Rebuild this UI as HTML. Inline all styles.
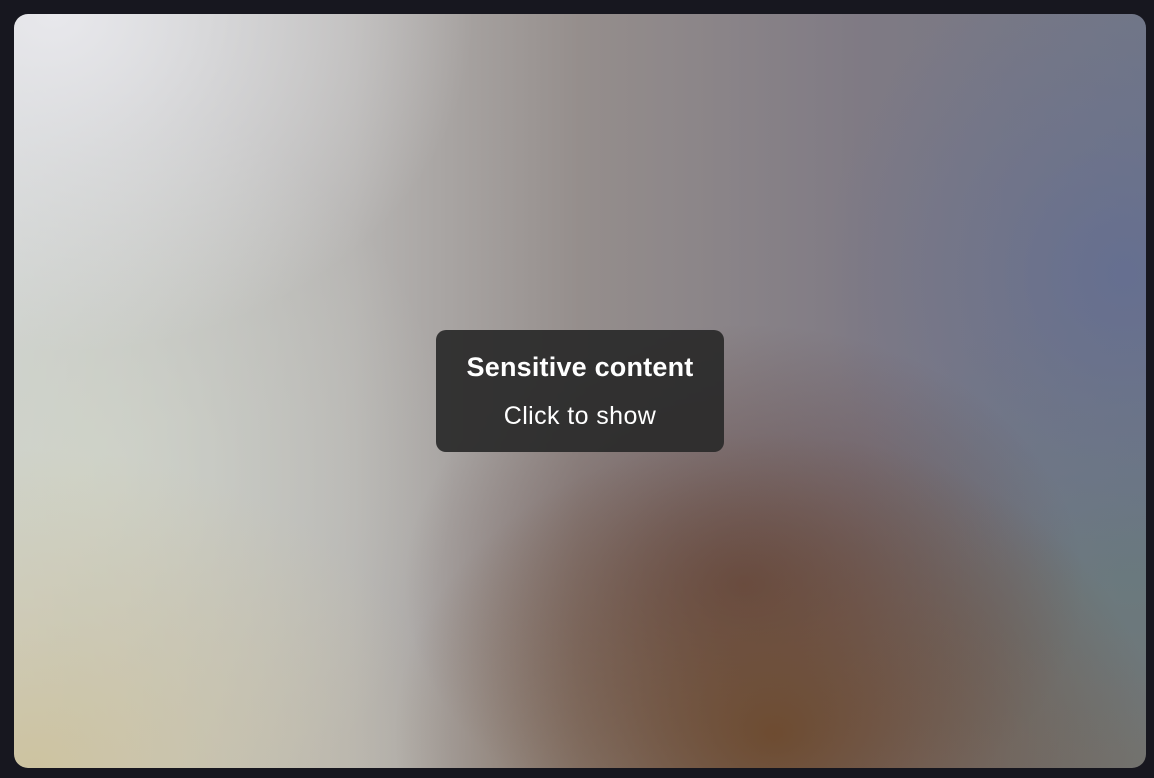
<!DOCTYPE html>
<html><head><meta charset="utf-8"><style>
html,body{margin:0;padding:0;width:1154px;height:778px;background:#17171f;overflow:hidden}
.card{position:absolute;left:14px;top:14px;width:1132px;height:754px;border-radius:14px;overflow:hidden;
background:
radial-gradient(ellipse 380px 300px at 760px 720px, rgba(108,72,42,0.9), rgba(108,72,42,0.5) 40%, rgba(108,72,42,0) 100%),
radial-gradient(ellipse 340px 260px at 730px 570px, rgba(95,65,62,0.8), rgba(95,65,62,0.4) 45%, rgba(95,65,62,0) 100%),
radial-gradient(ellipse 300px 320px at 1110px 260px, rgba(100,110,145,0.9), rgba(100,110,145,0.4) 45%, rgba(100,110,145,0) 100%),
radial-gradient(ellipse 300px 280px at 1120px 560px, rgba(105,122,125,0.9), rgba(105,122,125,0.4) 45%, rgba(105,122,125,0) 100%),
radial-gradient(ellipse 300px 260px at 1130px 750px, rgba(118,112,104,0.9), rgba(118,112,104,0) 100%),
radial-gradient(ellipse 420px 340px at 40px 0px, rgba(232,232,236,1), rgba(232,232,236,0.5) 45%, rgba(232,232,236,0) 100%),
radial-gradient(ellipse 420px 320px at 20px 754px, rgba(205,195,160,1), rgba(205,195,160,0.5) 45%, rgba(205,195,160,0) 100%),
radial-gradient(ellipse 380px 380px at 60px 460px, rgba(208,212,200,0.9), rgba(208,212,200,0.4) 45%, rgba(208,212,200,0) 100%),
linear-gradient(90deg, #cdd0d0 0%, #b6b4b2 30%, #958e8c 50%, #7f7a84 75%, #727786 100%);}
.box{position:absolute;left:436px;top:330px;width:288px;height:122px;border-radius:10px;background:rgba(42,42,42,0.93);
color:#fff;font-family:"Liberation Sans",sans-serif;text-align:center}
.t1{position:absolute;top:22px;width:100%;font-size:27px;font-weight:bold;letter-spacing:0.2px}
.t2{position:absolute;top:72px;width:100%;font-size:25px;letter-spacing:0.4px}
</style></head><body>
<div class="card"></div>
<div class="box"><div class="t1">Sensitive content</div><div class="t2">Click to show</div></div>
</body></html>
